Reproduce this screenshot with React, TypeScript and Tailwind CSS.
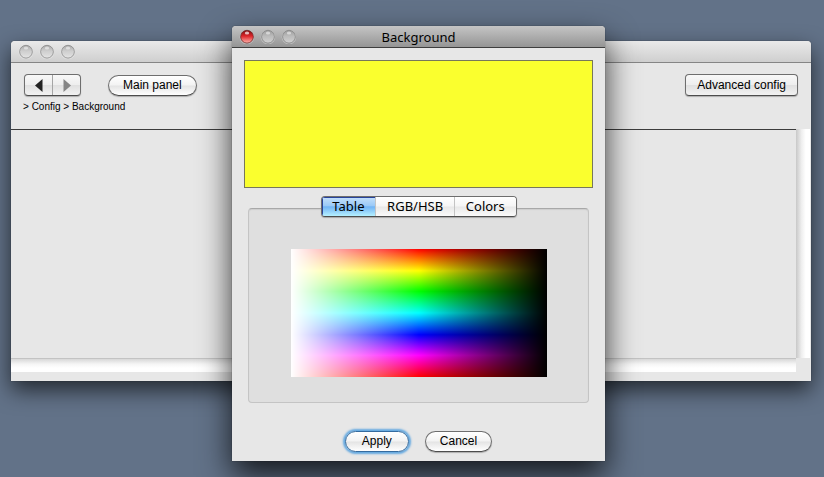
import { useState } from 'react';

const tabs = ['Table', 'RGB/HSB', 'Colors'];

function Light({ red = false }: { red?: boolean }) {
  const id = red ? 'light-red' : 'light-gray';
  return (
    <svg width="15" height="15" viewBox="0 0 15 15" aria-hidden="true">
      <defs>
        <linearGradient id={id} x1="0" y1="0" x2="0" y2="1">
          <stop offset="0" stopColor={red ? '#7c1011' : '#888'} stopOpacity={red ? 1 : 0.65} />
          <stop offset="0.45" stopColor={red ? '#dc2529' : '#c4c4c4'} stopOpacity={red ? 1 : 0.6} />
          <stop offset="1" stopColor={red ? '#ffb5ad' : '#eee'} stopOpacity={red ? 1 : 0.65} />
        </linearGradient>
      </defs>
      <circle cx="8" cy="8.2" r="6.8" fill="none" stroke="#fff" strokeOpacity="0.4" />
      <circle
        cx="8"
        cy="7.7"
        r="6.4"
        fill={`url(#${id})`}
        stroke={red ? '#651c1c' : '#6f6f6f'}
        strokeOpacity={red ? 0.7 : 0.6}
      />
      <ellipse cx="8" cy="4" rx="2.2" ry="1.6" fill="#fff" fillOpacity={red ? 0.7 : 0.5} />
    </svg>
  );
}

function Lights({ active = false }: { active?: boolean }) {
  return (
    <div className="flex gap-[6px]">
      <button type="button" aria-label="Close"><Light red={active} /></button>
      <button type="button" aria-label="Minimize"><Light /></button>
      <button type="button" aria-label="Zoom"><Light /></button>
    </div>
  );
}

const gloss = 'bg-[linear-gradient(#ffffff,#f3f3f3_48%,#e4e4e4_52%,#ffffff)]';
const flat = 'bg-[linear-gradient(#f8f8f8,#eeeeee_48%,#e0e0e0_52%,#f2f2f2)]';
const edge = 'border border-[#6e6e6e] border-b-[#4c4c4c] shadow-[0_1px_1px_rgba(0,0,0,0.25)]';

export default function App() {
  const [tab, setTab] = useState('Table');
  return (
    <div className="relative min-h-screen overflow-hidden bg-[#627288] font-['Liberation_Sans',Arial,sans-serif] text-xs text-black">
      <main className="absolute top-[41px] right-[13px] left-[11px] rounded-t-[4px] bg-[#e7e7e7] shadow-[0_0_1px_rgba(0,0,0,0.7),0_9px_22px_rgba(0,0,0,0.65)]">
        <header className="flex h-[22px] items-center rounded-t-[4px] border-b border-[#858585] bg-linear-to-b from-[#eaeaea] to-[#cfcfcf] px-[7px]">
          <Lights />
        </header>
        <div className="flex items-start justify-between px-[13px] pt-[11px]">
          <div className="flex items-start gap-[27px]">
            <div className={`flex h-[22px] w-[57px] rounded-[4px] ${flat} ${edge}`}>
              <button type="button" aria-label="Back" className="flex flex-1 items-center justify-center">
                <svg width="8" height="13" viewBox="0 0 8 13"><path d="M7.5 0v13L0 6.5z" fill="#222" /></svg>
              </button>
              <button type="button" aria-label="Forward" className="flex flex-1 items-center justify-center border-l border-[#a5a5a5]">
                <svg width="8" height="13" viewBox="0 0 8 13"><path d="M0.5 0v13l7.5-6.5z" fill="#858585" /></svg>
              </button>
            </div>
            <button type="button" className={`mt-px h-[21px] rounded-full px-[14px] pb-[2px] ${gloss} ${edge}`}>Main panel</button>
          </div>
          <button type="button" className={`h-[22px] rounded-[4px] px-[11px] pb-px ${flat} ${edge}`}>Advanced config</button>
        </div>
        <nav aria-label="Breadcrumb" className="px-3 pt-1 text-[10px] leading-[14px]">
          &gt; <a href="#config">Config</a> &gt; <a href="#background">Background</a>
        </nav>
        <div className="mt-[15px] grid grid-cols-[1fr_15px] grid-rows-[229px_14px] pb-[9px]">
          <div className="border-t border-[#3c3c3c]" />
          <div className="border-r border-[#e7e7e7] bg-[linear-gradient(to_right,#c8c8c8,#efefef_40%,#ffffff_70%)]" />
          <div className="border-t border-[#c3c3c3] bg-[linear-gradient(#d8d8d8,#f6f6f6_40%,#ffffff_70%)]" />
        </div>
      </main>

      <section
        role="dialog"
        aria-labelledby="dialog-title"
        className="absolute top-[26px] left-[232px] w-[373px] rounded-t-[4px] bg-[#e7e7e7] shadow-[0_0_1px_rgba(0,0,0,0.8),0_14px_32px_rgba(0,0,0,0.8)]"
      >
        <header className="grid h-[22px] grid-cols-[1fr_auto_1fr] items-center rounded-t-[4px] border-b border-[#3e3e3e] bg-linear-to-b from-[#c5c5c5] to-[#959595] px-[7px]">
          <Lights active />
          <h1 id="dialog-title" className="font-['Noto_Sans',sans-serif] text-[13px] leading-5">Background</h1>
        </header>
        <div className="px-3 pt-3 pb-[9px]">
          <div className="h-[128px] border border-[#77775a] bg-[#faff2e]" />
          <div className="mx-1 mt-2">
            <div role="tablist" className={`relative z-10 mx-auto flex h-[21px] w-[196px] overflow-hidden rounded-[4px] font-['Noto_Sans',sans-serif] text-[13px] leading-[19px] ${edge}`}>
              {tabs.map((name) => (
                <button
                  key={name}
                  type="button"
                  role="tab"
                  aria-selected={tab === name}
                  onClick={() => setTab(name)}
                  className={
                    'flex-auto border-r border-[#c4c4c4] last:border-r-0 ' +
                    (tab === name
                      ? 'bg-[linear-gradient(#c5e0fa,#9bcaf7_45%,#72b4f5_52%,#b5f0ff)] shadow-[inset_1px_1px_0_#28439a]'
                      : 'bg-[linear-gradient(#ffffff,#f5f5f5_48%,#e8e8e8_52%,#fafafa)]')
                  }
                >
                  {name}
                </button>
              ))}
            </div>
            <div role="tabpanel" className="-mt-[9px] rounded-[4px] border border-[#c4c4c4] border-t-[#a8a8a8] bg-[#dfdfdf] pt-10 pb-[25px] shadow-[inset_0_1px_1px_rgba(0,0,0,0.08)]">
              <div
                role="img"
                aria-label="Color table"
                className="mx-auto h-[128px] w-[256px] bg-[linear-gradient(to_right,#ffffff,rgba(255,255,255,0)_50%,rgba(0,0,0,0)_50%,#000000),linear-gradient(#ff0000,#ffff00_17%,#00ff00_33%,#00ffff_50%,#0000ff_67%,#ff00ff_83%,#ff0000)]"
              />
            </div>
          </div>
          <div className="mt-7 flex justify-center gap-4">
            <button type="button" className={`h-[21px] rounded-full border border-[#346b9f] px-4 pb-[2px] shadow-[0_0_2px_2px_#65a9e0] ${gloss}`}>Apply</button>
            <button type="button" className={`h-[21px] rounded-full px-[14px] pb-[2px] ${gloss} ${edge}`}>Cancel</button>
          </div>
        </div>
      </section>
    </div>
  );
}
